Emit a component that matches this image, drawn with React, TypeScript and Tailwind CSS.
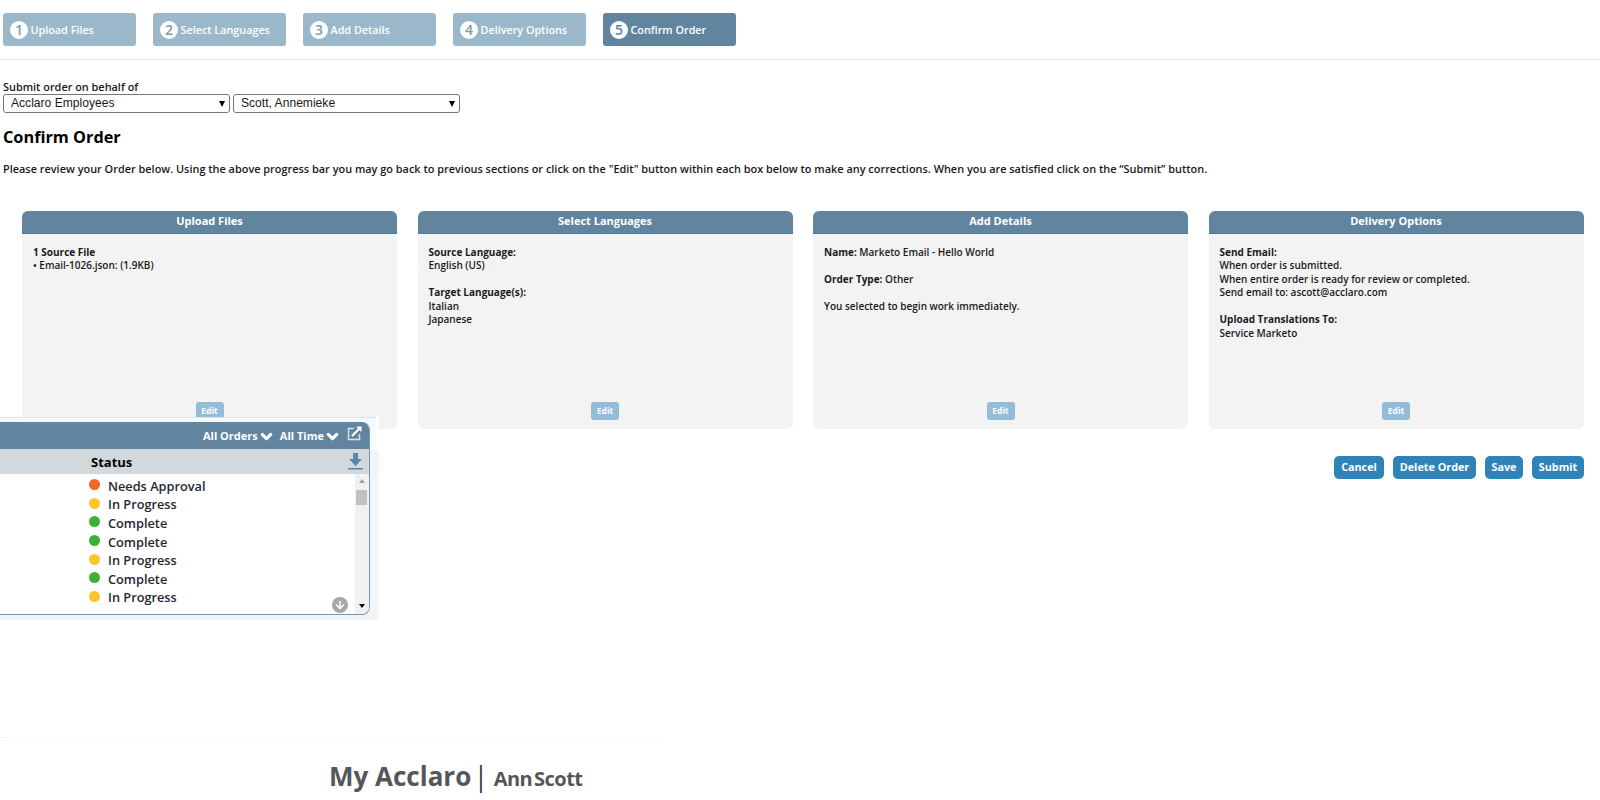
import React from 'react';
import { ChevronDown, ArrowDown } from 'lucide-react';

const steps = ['Upload Files', 'Select Languages', 'Add Details', 'Delivery Options', 'Confirm Order'];

const statuses = [
  { label: 'Needs Approval', color: 'bg-[#f26522]' },
  { label: 'In Progress', color: 'bg-[#fdc52c]' },
  { label: 'Complete', color: 'bg-[#3cb035]' },
  { label: 'Complete', color: 'bg-[#3cb035]' },
  { label: 'In Progress', color: 'bg-[#fdc52c]' },
  { label: 'Complete', color: 'bg-[#3cb035]' },
  { label: 'In Progress', color: 'bg-[#fdc52c]' },
];

const actions = [
  { label: 'Cancel', width: 'w-[50px]' },
  { label: 'Delete Order', width: 'w-[83px]' },
  { label: 'Save', width: 'w-[38px]' },
  { label: 'Submit', width: 'w-[52px]' },
];

const Card: React.FC<{ title: string; children: React.ReactNode }> = ({ title, children }) => (
  <div className="w-[375px] h-[218px] bg-[#f3f3f3] rounded-md flex flex-col overflow-hidden">
    <div className="h-[23px] pb-[1px] bg-[#62859f] border-b border-[#4f7794] text-white text-[11px] font-bold flex items-center justify-center shrink-0">
      {title}
    </div>
    <div className="flex-1 px-[11px] pt-[11.5px] text-[10px] leading-[13.6px] text-[#1a1a1a] font-semibold">{children}</div>
    <div className="flex justify-center pb-[9px]">
      <button className="h-[18px] w-[28px] bg-[#92bcd8] rounded-[3px] text-white text-[8.5px] font-bold">Edit</button>
    </div>
  </div>
);

const Select: React.FC<{ value: string }> = ({ value }) => (
  <div className="relative w-[227px] h-[19px] border border-[#767676] rounded-[3px] bg-white flex items-center pl-[7px] text-[12.1px] text-[#1a1a1a] font-['Liberation_Sans',sans-serif]">
    {value}
    <span className="absolute right-[4px] top-[6px] w-0 h-0 border-l-[3px] border-r-[3px] border-t-[6px] border-l-transparent border-r-transparent border-t-black" />
  </div>
);

const App: React.FC = () => {
  return (
    <div className="relative w-[1600px] h-[800px] overflow-hidden bg-white font-['Open_Sans',sans-serif]">
      <div className="h-[60px] border-b border-[#dde3e8] pt-[13px] pl-[3px] flex gap-[17px]">
        {steps.map((s, i) => (
          <div
            key={s}
            className={`w-[133px] h-[33px] rounded-[3px] flex items-center pl-[7px] gap-[2.5px] text-white text-[10.8px] font-semibold ${i === 4 ? 'bg-[#62859f]' : 'bg-[#9ab8ca]'}`}
          >
            <span className={`w-[18px] h-[18px] rounded-full bg-white text-[14px] font-semibold flex items-center justify-center ${i === 4 ? 'text-[#62859f]' : 'text-[#7c9bb0]'}`}>
              {i + 1}
            </span>
            <span className="mt-[1px]">{s}</span>
          </div>
        ))}
      </div>

      <div className="pl-[3px] pt-[20px]">
        <div className="text-[10.9px] leading-[14px] font-semibold text-[#1a1a1a]">Submit order on behalf of</div>
        <div className="flex gap-[3px]">
          <Select value="Acclaro Employees" />
          <Select value="Scott, Annemieke" />
        </div>
        <h1 className="mt-[12px] text-[16.3px] leading-[24px] font-bold text-black">Confirm Order</h1>
        <p className="mt-[13px] text-[10.92px] leading-[14px] font-semibold text-[#1a1a1a]">
          Please review your Order below. Using the above progress bar you may go back to previous sections or click on the "Edit" button within each box below to make any corrections. When you are satisfied click on the “Submit” button.
        </p>
      </div>

      <div className="pl-[22px] pt-[35px] flex gap-[20.5px]">
        <Card title="Upload Files">
          <div className="font-bold">1 Source File</div>
          <div>• Email-1026.json: (1.9KB)</div>
        </Card>
        <Card title="Select Languages">
          <div className="font-bold">Source Language:</div>
          <div>English (US)</div>
          <div className="font-bold mt-[13.6px]">Target Language(s):</div>
          <div>Italian</div>
          <div>Japanese</div>
        </Card>
        <Card title="Add Details">
          <div><span className="font-bold">Name:</span> Marketo Email - Hello World</div>
          <div className="mt-[13.6px]"><span className="font-bold">Order Type:</span> Other</div>
          <div className="mt-[13.6px]">You selected to begin work immediately.</div>
        </Card>
        <Card title="Delivery Options">
          <div className="font-bold">Send Email:</div>
          <div>When order is submitted.</div>
          <div>When entire order is ready for review or completed.</div>
          <div>Send email to: ascott@acclaro.com</div>
          <div className="font-bold mt-[13.6px]">Upload Translations To:</div>
          <div>Service Marketo</div>
        </Card>
      </div>

      <div className="pt-[27px] pr-[16px] flex justify-end gap-[9px]">
        {actions.map((b) => (
          <button key={b.label} className={`h-[23px] ${b.width} bg-[#3083b8] rounded-[5px] text-white text-[10.8px] font-bold`}>
            {b.label}
          </button>
        ))}
      </div>

      {/* embedded widget screenshot sitting over the first card */}
      <div className="absolute left-0 top-[417px] w-[379px] h-[203px] bg-[#f3f4f6] pt-[5px]">
        <div className="absolute left-0 top-0 w-full h-[33px] bg-white">
          <div className="w-[376px] h-full bg-[#f7fafc] border-t border-[#dbe5ea]" />
        </div>
        <div className="relative w-[370px] h-[193px] bg-white rounded-br-lg rounded-tr-lg border-r border-b border-[#6f97ad] flex flex-col overflow-hidden">
          <div className="h-[27px] pt-[2px] bg-[#62859f] text-white text-[11px] font-bold flex items-center justify-end pr-[7px] shrink-0">
            All Orders
            <ChevronDown size={17} strokeWidth={4.5} className="mr-[5px]" />
            All Time
            <ChevronDown size={17} strokeWidth={4.5} className="mr-[6px]" />
            <svg width="15" height="15" viewBox="0 0 15 15" fill="none" className="-mt-[6px]">
              <path d="M7 2.500H1.500v11h11V8" stroke="#d5e0e7" strokeWidth="1.500" />
              <path d="M9 0.500h5.500V6z" fill="#fff" />
              <path d="M5 10l7-7" stroke="#fff" strokeWidth="2.200" />
            </svg>
          </div>
          <div className="h-[25px] bg-[#d2d9dd] flex items-center justify-between pl-[91px] pr-[6px] shrink-0">
            <span className="text-[13px] font-bold text-black mt-[3px]">Status</span>
            <svg width="15" height="17" viewBox="0 0 15 17" className="text-[#5d87a6]" fill="currentColor">
              <path d="M5 0h5v6h4l-6.500 7L1 6h4z" />
              <rect x="0" y="15" width="15" height="1.500" />
            </svg>
          </div>
          <div className="flex-1 flex relative">
            <div className="flex-1 pl-[89px] pt-[3px] text-[12.75px] font-semibold text-[#1f2933]">
              {statuses.map((s, i) => (
                <div key={i} className="h-[18.6px] flex items-center">
                  <span className={`w-[11px] h-[11px] rounded-full mr-[8px] -mt-[3px] ${s.color}`} />
                  {s.label}
                </div>
              ))}
            </div>
            <span className="absolute right-[21px] bottom-[1px] w-[16px] h-[16px] rounded-full bg-[#a8a8a8] flex items-center justify-center">
              <ArrowDown size={12} strokeWidth={3} className="text-white" />
            </span>
            <div className="w-[14px] bg-[#f1f1f1] relative">
              <span className="absolute left-[4px] top-[5px] w-0 h-0 border-l-[3px] border-r-[3px] border-b-[4px] border-l-transparent border-r-transparent border-b-[#a3a3a3]" />
              <div className="absolute left-[1px] top-[16px] w-[11px] h-[15px] bg-[#c1c1c1]" />
              <span className="absolute left-[4px] bottom-[6px] w-0 h-0 border-l-[3px] border-r-[3px] border-t-[4px] border-l-transparent border-r-transparent border-t-black" />
            </div>
          </div>
        </div>
      </div>

      {/* footer: faint dotted rule and title */}
      <div className="absolute left-0 top-[737px] w-[660px] border-t border-dotted border-[#ececec]" />
      <div className="absolute left-[329px] top-[757px] flex items-baseline text-[#55565a] font-bold">
        <span className="text-[26px] leading-[36px]">My Acclaro</span>
        <span className="text-[28px] leading-[36px] font-normal ml-[2px] mr-[4px] text-[#444]">|</span>
        <span className="text-[20px] leading-[36px] tracking-[-0.5px] [word-spacing:-3px] ml-[1px]">Ann Scott</span>
      </div>
    </div>
  );
};

export default App;
